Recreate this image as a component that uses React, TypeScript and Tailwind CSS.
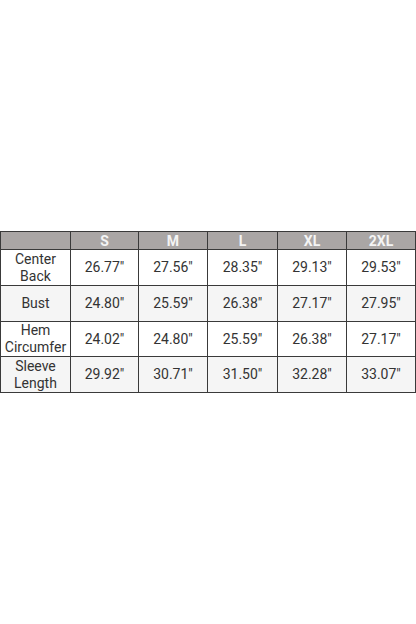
import React from 'react';

const SIZES = ['S', 'M', 'L', 'XL', '2XL'];

const ROWS: {label: string[]; values: string[]; shade: boolean; height: string}[] = [
  {label: ['Center', 'Back'], values: ['26.77"', '27.56"', '28.35"', '29.13"', '29.53"'], shade: false, height: 'h-[36px]'},
  {label: ['Bust'], values: ['24.80"', '25.59"', '26.38"', '27.17"', '27.95"'], shade: true, height: 'h-[36px]'},
  {label: ['Hem', 'Circumfer'], values: ['24.02"', '24.80"', '25.59"', '26.38"', '27.17"'], shade: false, height: 'h-[35px]'},
  {label: ['Sleeve', 'Length'], values: ['29.92"', '30.71"', '31.50"', '32.28"', '33.07"'], shade: true, height: 'h-[36px]'},
];

export default function App() {
  return (
    <div className="w-[416px] h-[624px] bg-white pt-[231px] font-['Roboto',sans-serif] text-[#333]">
      <div className="grid grid-cols-[70px_68px_69px_70px_69px_69px] border-t border-l border-[#3a3a3a]">
        <div className="h-[18px] bg-[#aaa6a5] border-r border-b border-[#3a3a3a]" />
        {SIZES.map((s) => (
          <div
            key={s}
            className="h-[18px] bg-[#aaa6a5] border-r border-b border-[#3a3a3a] flex items-center justify-center text-[14px] font-bold leading-none text-[#f4f4f4]">
            {s}
          </div>
        ))}
        {ROWS.map((row) => (
          <React.Fragment key={row.label.join(' ')}>
            <div
              className={`${row.height} ${row.shade ? 'bg-[#f5f5f5]' : 'bg-white'} border-r border-b border-[#3a3a3a] flex flex-col items-center justify-center text-[14px] leading-[17px]`}>
              {row.label.map((l) => (
                <span key={l}>{l}</span>
              ))}
            </div>
            {row.values.map((v, i) => (
              <div
                key={i}
                className={`${row.height} ${row.shade ? 'bg-[#f5f5f5]' : 'bg-white'} border-r border-b border-[#3a3a3a] flex items-center justify-center text-[14px]`}>
                {v}
              </div>
            ))}
          </React.Fragment>
        ))}
      </div>
    </div>
  );
}
